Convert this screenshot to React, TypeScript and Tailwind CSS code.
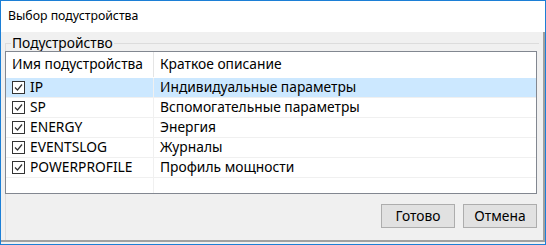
import React from "react";

const rows = [
  { name: "IP", desc: "Индивидуальные параметры", sel: true },
  { name: "SP", desc: "Вспомогательные параметры" },
  { name: "ENERGY", desc: "Энергия" },
  { name: "EVENTSLOG", desc: "Журналы" },
  { name: "POWERPROFILE", desc: "Профиль мощности" },
];

function Check() {
  return (
    <span className="w-[13px] h-[13px] border border-[#333] bg-white flex items-center justify-center shrink-0">
      <svg width="11" height="11" viewBox="0 0 11 11">
        <path d="M2 5.5 L4.5 8 L9 2.5" fill="none" stroke="#333" strokeWidth="1.2" />
      </svg>
    </span>
  );
}

export default function App() {
  return (
    <div
      className="w-[546px] h-[245px] border border-[#1c7fd6] bg-[#f0f0f0] flex flex-col text-[13.8px] text-black"
      style={{ fontFamily: '"Noto Sans", "Segoe UI", sans-serif' }}
    >
      <div className="h-[31px] bg-white flex items-center pl-[7px] shrink-0 text-[12.3px]">Выбор подустройства</div>
      <div className="flex-1 flex flex-col border-r-[2px] border-b-[2px] border-[#a0a0a0] mb-[2px]">
        <div className="flex-1 relative mx-[4px] mt-[3px] flex flex-col">
          <div className="absolute left-0 right-0 top-[8px] bottom-0 border border-[#dcdcdc] border-b-0 border-r-0" />
          <div className="relative pl-[6px] h-[16px] leading-[16px]">
            <span className="bg-[#f0f0f0] px-[1px]">Подустройство</span>
          </div>
          <div className="relative border border-[#828790] bg-white h-[143px] mr-[2px] flex flex-col">
            <div className="flex h-[25px] shrink-0">
              <div className="w-[148px] border-r border-[#e5e5e5] flex items-center pl-[6px]">Имя подустройства</div>
              <div className="flex-1 flex items-center pl-[6px]">Краткое описание</div>
            </div>
            <div className="h-[1px]" />
            {rows.map((r) => (
              <div key={r.name} className={`flex h-[20px] border-b border-[#f0f0f0] ${r.sel ? "bg-[#cce8ff]" : ""}`}>
                <div className="w-[148px] border-r border-[#f0f0f0] flex items-center pl-[6px] gap-[5px]">
                  <Check />
                  <span>{r.name}</span>
                </div>
                <div className={`flex-1 flex items-center pl-[6px] ${r.sel ? "mr-[2px]" : ""}`}>{r.desc}</div>
              </div>
            ))}
            <div className="flex flex-1">
              <div className="w-[148px] border-r border-[#f0f0f0]" />
              <div className="flex-1" />
            </div>
          </div>
          <div className="flex-1 flex justify-end items-center gap-[8px] pr-[2px] pb-[2px]">
            <button className="w-[74px] h-[24px] bg-[#e1e1e1] border border-[#adadad]">Готово</button>
            <button className="w-[74px] h-[24px] bg-[#e1e1e1] border border-[#adadad]">Отмена</button>
          </div>
        </div>
      </div>
    </div>
  );
}
